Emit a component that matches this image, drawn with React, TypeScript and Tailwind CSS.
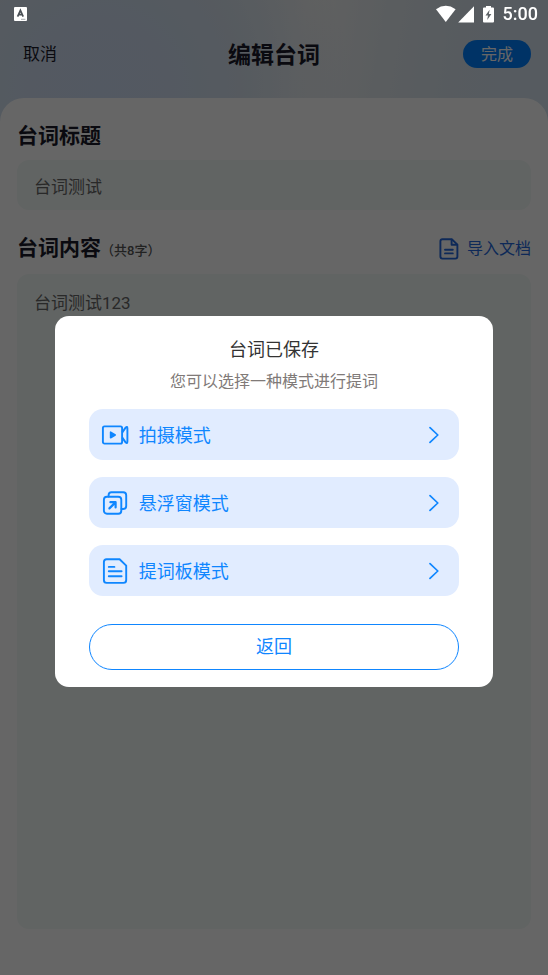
import { useState } from "react";
import type { ReactNode } from "react";

interface Mode {
  id: string;
  label: string;
  icon: ReactNode;
}

const VideoIcon = () => (
  <svg width="28" height="28" viewBox="0 0 28 28" fill="none" stroke="currentColor" strokeWidth="1.9" strokeLinejoin="round" aria-hidden="true">
    <rect x="1.9" y="5.4" width="19.2" height="17.2" rx="1.6" />
    <path d="M21.3 11.4 24.6 6.6Q26.4 4.8 26.4 7.4V20.6Q26.4 23.2 24.6 21.4L21.3 16.6" />
    <path d="M9.6 11.2V16.8L14.2 14Z" fill="currentColor" strokeWidth="1.6" />
  </svg>
);

const FloatWindowIcon = () => (
  <svg width="28" height="28" viewBox="0 0 28 28" fill="none" stroke="currentColor" strokeWidth="1.9" strokeLinecap="round" strokeLinejoin="round" aria-hidden="true">
    <rect x="2.9" y="7.8" width="17.4" height="17" rx="3" />
    <path d="M7.6 7.6V6Q7.6 3.2 10.4 3.2H22.2Q25.2 3.2 25.2 6.2V17Q25.2 20 22.2 20H20.5" />
    <path d="M8.4 19.4 14.2 13.6M9.4 13.2H14.6V18.4" strokeWidth="2.2" />
  </svg>
);

const BoardIcon = () => (
  <svg width="28" height="28" viewBox="0 0 28 28" fill="none" stroke="currentColor" strokeWidth="1.9" strokeLinecap="round" strokeLinejoin="round" aria-hidden="true">
    <path d="M5.6 2.2H18.6L25.2 8.6V23Q25.2 25.9 22.4 25.9H5.6Q2.9 25.9 2.9 23V5Q2.9 2.2 5.6 2.2Z" />
    <path d="M7.8 9.9H13.4M7.8 14.3H20.6M7.8 19.3H20.6" />
  </svg>
);

const DocumentIcon = () => (
  <svg width="20" height="22" viewBox="0 0 20 22" fill="none" stroke="currentColor" strokeWidth="1.9" strokeLinecap="round" strokeLinejoin="round" aria-hidden="true">
    <path d="M3.4 1.2H12.8L18.4 6.6V18.6Q18.4 20.6 16.4 20.6H3.4Q1.4 20.6 1.4 18.6V3.2Q1.4 1.2 3.4 1.2Z" />
    <path d="M12.6 1.6V6.8H18" />
    <path d="M6 11.8H13.8M6 15.4H13.8" />
  </svg>
);

const ArrowIcon = () => (
  <svg width="10" height="18" viewBox="0 0 10 18" fill="none" stroke="currentColor" strokeWidth="1.7" strokeLinecap="round" strokeLinejoin="round" aria-hidden="true">
    <path d="M1 1.6 8.8 9 1 16.4" />
  </svg>
);

const modes: Mode[] = [
  { id: "shoot", label: "拍摄模式", icon: <VideoIcon /> },
  { id: "float", label: "悬浮窗模式", icon: <FloatWindowIcon /> },
  { id: "board", label: "提词板模式", icon: <BoardIcon /> },
];

const StatusBar = () => (
  <div className="fixed inset-x-0 top-0 z-20 flex h-7 items-center justify-between pr-2.5 pl-3.5 text-white">
    <svg width="13" height="14" viewBox="0 0 13 14" aria-hidden="true">
      <rect width="13" height="14" rx="1" fill="currentColor" />
      <path d="M3.6 9.6 6.4 3.4 9.2 9.6M4.7 7.6H8.1" fill="none" stroke="#4b5157" strokeWidth="1.7" />
      <path d="M7 12.3H11.4" stroke="#a5a9ad" />
    </svg>
    <div className="flex items-center">
      <svg width="60" height="18" viewBox="0 0 60 18" fill="currentColor" aria-hidden="true">
        <path d="M1 4.3Q10.8-2.6 20.6 4.3L10.8 17Z" />
        <path d="M39 1.2V17.4H23.2Z" />
        <path d="M51 1H56V2.5H58Q59 2.5 59 3.5V16.4Q59 17.4 58 17.4H49Q48 17.4 48 16.4V3.5Q48 2.5 49 2.5H51Z" />
        <path d="M54.6 4.8 50.5 10.6H53L52.2 15 56.4 9H53.9Z" fill="#5f6468" />
      </svg>
      <span className="ml-2 font-[Roboto,sans-serif] text-lg leading-7 font-medium">5:00</span>
    </div>
  </div>
);

interface SavedModalProps {
  onClose: () => void;
}

const SavedModal = ({ onClose }: SavedModalProps) => (
  <div className="fixed inset-0 z-10 flex items-center justify-center bg-black/60 pt-7">
    <div
      role="dialog"
      aria-modal="true"
      aria-labelledby="saved-title"
      className="flex w-4/5 flex-col rounded-[14px] bg-white px-[34px] pt-5 pb-[17px]"
    >
      <h2 id="saved-title" className="text-center text-lg leading-7 text-[#333333]">
        台词已保存
      </h2>
      <p className="mt-1 text-center text-base leading-7 text-[#807a78]">
        您可以选择一种模式进行提词
      </p>
      <ul className="mt-[13px] flex flex-col gap-[17px]">
        {modes.map((mode) => (
          <li key={mode.id}>
            <button
              type="button"
              className="flex h-[51px] w-full items-center rounded-[14px] bg-[#e1ecff] pr-5 pl-3 text-lg text-[#0f86ff]"
            >
              {mode.icon}
              <span className="ml-2.5 flex-1 pt-0.5 text-left">{mode.label}</span>
              <ArrowIcon />
            </button>
          </li>
        ))}
      </ul>
      <button
        type="button"
        onClick={onClose}
        className="mt-7 h-[46px] rounded-full border border-[#0f86ff] text-lg text-[#0f86ff]"
      >
        返回
      </button>
    </div>
  </div>
);

const App = () => {
  const [title, setTitle] = useState<string>("台词测试");
  const [content, setContent] = useState<string>("台词测试123");
  const [isSavedOpen, setSavedOpen] = useState<boolean>(true);

  return (
    <div className="flex min-h-screen flex-col bg-[radial-gradient(circle_at_100px_90px,#d0def4_0,#d1dff3_70px,#d6e2ee_140px,transparent_250px),linear-gradient(100deg,#d6e4ee_0%,#dbe6ee_25%,#f2f2f0_54%,#e2e9ee_68%,#d9e4ee_82%,#d6e4f0_100%)] bg-[length:100%_124px] bg-no-repeat pt-7 font-[Roboto,'Noto_Sans_CJK_SC',sans-serif]">
      <StatusBar />

      {/* 顶部导航 */}
      <header className="grid h-[52px] grid-cols-3 items-center px-[17px] text-[#1a1a2a]">
        <button type="button" className="justify-self-start px-1.5 pt-0.5 text-[17px]">
          取消
        </button>
        <h1 className="pt-1 text-center text-[23px] font-bold">编辑台词</h1>
        <button
          type="button"
          onClick={() => setSavedOpen(true)}
          className="flex h-7 items-center justify-self-end rounded-full bg-[#0080ff] px-[18px] pt-0.5 text-base text-white"
        >
          完成
        </button>
      </header>

      <main className="mt-[18px] flex flex-1 flex-col rounded-t-3xl bg-white px-[17px] pt-5 pb-[46px]">
        <label htmlFor="script-title" className="text-[21px] leading-9 font-bold text-[#1a1a2a]">
          台词标题
        </label>
        <input
          id="script-title"
          value={title}
          onChange={(e) => setTitle(e.target.value)}
          className="mt-1.5 h-[50px] rounded-xl bg-[#f3faf7] px-[17px] text-[17px] text-[#666666] outline-none"
        />

        <div className="mt-[21px] flex h-9 items-center justify-between">
          <label htmlFor="script-content" className="text-[21px] font-bold text-[#1a1a2a]">
            台词内容
            <span className="text-[13px] font-medium text-[#555555]">（共8字）</span>
          </label>
          <button type="button" className="flex items-center gap-2 text-base text-[#2468dc]">
            <DocumentIcon />
            导入文档
          </button>
        </div>
        <textarea
          id="script-content"
          value={content}
          onChange={(e) => setContent(e.target.value)}
          className="mt-[7px] flex-1 resize-none rounded-xl bg-[#f3faf7] px-[17px] py-[17px] text-[17px] leading-6 text-[#666666] outline-none"
        />
      </main>

      {isSavedOpen && <SavedModal onClose={() => setSavedOpen(false)} />}
    </div>
  );
};

export default App;
